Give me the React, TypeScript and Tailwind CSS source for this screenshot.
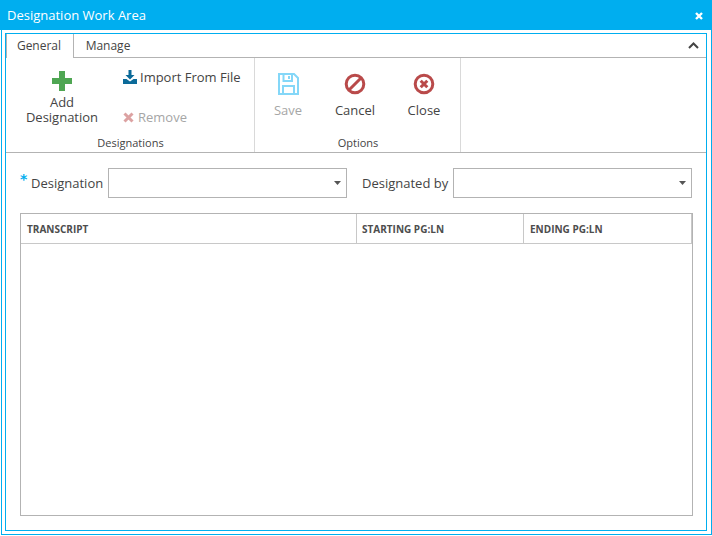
const font = "font-['Open_Sans',sans-serif]";

function RibbonButton({ icon, label, muted }: { icon: React.ReactNode; label: string; muted?: boolean }) {
  return (
    <div className={`flex flex-col items-center w-[70px] ${muted ? "text-[#a6a6a6]" : "text-[#444444]"}`}>
      <div className="h-[24px] w-[24px]">{icon}</div>
      <span className="mt-[5px] text-[13px] leading-[18px]">{label}</span>
    </div>
  );
}

function Select({ width }: { width: string }) {
  return (
    <div className={`${width} h-[30px] border border-[#b3b3b3] bg-white flex items-center justify-end pr-[5px]`}>
      <svg width="7" height="4" viewBox="0 0 7 4">
        <path d="M0 0h7L3.5 4z" fill="#555555" />
      </svg>
    </div>
  );
}

const SaveIcon = (
  <svg width="24" height="24" viewBox="0 0 24 24" fill="none" stroke="#84d7f8" strokeWidth="2">
    <path d="M3 2h15l4 4v16H3z" />
    <path d="M7.5 2v7h8.5V2" />
    <path d="M7 22v-8h11v8" />
    <path d="M13 4v3" />
  </svg>
);

const CancelIcon = (
  <svg width="24" height="24" viewBox="0 0 24 24" fill="none" stroke="#b94a4a" strokeWidth="3">
    <circle cx="12" cy="12" r="8.8" />
    <path d="M6 18 18 6" />
  </svg>
);

const CloseIcon = (
  <svg width="24" height="24" viewBox="0 0 24 24" fill="none" stroke="#b94a4a">
    <circle cx="12" cy="12" r="8.8" strokeWidth="3" />
    <path d="M8.7 8.7l6.6 6.6M15.3 8.7l-6.6 6.6" strokeWidth="3" />
  </svg>
);

export default function App() {
  return (
    <div className={`${font} w-[712px] h-[536px] bg-white overflow-hidden`}>
      <div className="w-[711px] h-[535px] ml-[1px] border-x border-b border-[#00aeef] flex flex-col">
        {/* Title bar */}
        <div className="h-[30px] -mx-[2px] pl-[7px] pr-[9px] pt-[1px] bg-[#00aeef] flex items-center justify-between text-white shrink-0">
          <span className="text-[13px] font-normal">Designation Work Area</span>
          <svg width="8" height="8" viewBox="0 0 8 8" stroke="#ffffff" strokeWidth="2.4" className="mr-[1px]">
            <path d="M1 1l6 6M7 1l-6 6" />
          </svg>
        </div>

        <div className="flex-1 mt-[3px] ml-[3px] mr-[4px] mb-[3px] border border-[#00aeef] flex flex-col min-h-0">
          {/* Tabs */}
          <div className="h-[24px] flex items-stretch border-b border-[#b3b3b3] relative shrink-0 text-[12px] text-[#444444]">
            <div className="w-[68px] h-[24px] pr-[2px] border-x border-[#b3b3b3] bg-white flex items-center justify-center">General</div>
            <div className="w-[68px] flex items-center justify-center">Manage</div>
            <svg width="11" height="7" viewBox="0 0 11 7" fill="none" stroke="#444444" strokeWidth="2" className="absolute right-[7px] top-[8px]">
              <path d="M1 6l4.5-4.5L10 6" />
            </svg>
          </div>

          {/* Ribbon */}
          <div className="h-[95px] flex border-b border-[#b3b3b3] shrink-0">
            <div className="w-[249px] border-r border-[#d9d9d9] flex flex-col">
              <div className="flex-1 flex">
                <div className="w-[112px] flex flex-col items-center pt-[13px] text-[13px] leading-[15px] text-[#444444]">
                  <svg width="20" height="20" viewBox="0 0 20 20" fill="#4fa653">
                    <path d="M7 0h6v7h7v6h-7v7H7v-7H0V7h7z" />
                  </svg>
                  <span className="mt-[4px] text-center">Add<br />Designation</span>
                </div>
                <div className="pt-[9px] pl-[5px] text-[13px] leading-[20px]">
                  <div className="flex items-center text-[#444444]">
                    <svg width="14" height="14" viewBox="0 0 14 14" fill="#0b6a99" className="mr-[3px]">
                      <path d="M5.5 0h3v5h3L7 9.5 2.5 5h3z" />
                      <path d="M0 9h3.5L7 11.5 10.5 9H14v5H0z" />
                    </svg>
                    <span>Import From File</span>
                  </div>
                  <div className="flex items-center text-[#a6a6a6] mt-[20px]">
                    <svg width="11" height="11" viewBox="0 0 11 11" stroke="#dca2a2" strokeWidth="3" className="mr-[4px]">
                      <path d="M1.5 1.5l8 8M9.5 1.5l-8 8" />
                    </svg>
                    <span>Remove</span>
                  </div>
                </div>
              </div>
              <div className="h-[20px] pt-[3px] pl-[1px] text-center text-[11px] leading-[16px] text-[#444444]">Designations</div>
            </div>
            <div className="w-[206px] border-r border-[#d9d9d9] flex flex-col">
              <div className="flex-1 flex pt-[14px]">
                <div className="ml-[-2px]"><RibbonButton icon={SaveIcon} label="Save" muted /></div>
                <div className="ml-[-3px]"><RibbonButton icon={CancelIcon} label="Cancel" /></div>
                <div className="ml-[-1px]"><RibbonButton icon={CloseIcon} label="Close" /></div>
              </div>
              <div className="h-[20px] pt-[3px] pl-[1px] text-center text-[11px] leading-[16px] text-[#444444]">Options</div>
            </div>
          </div>

          {/* Form */}
          <div className="flex-1 flex flex-col pl-[14px] pr-[13px] pt-[15px] pb-[14px] min-h-0">
            <div className="flex items-center h-[30px] text-[13px] text-[#444444] shrink-0">
              <span className="font-['DejaVu_Sans',sans-serif] text-[#00aeef] text-[14px] leading-none font-bold w-[11px] -mt-[8px]">*</span>
              <span className="w-[77px] pt-[2px]">Designation</span>
              <Select width="w-[239px]" />
              <span className="ml-[15px] w-[91px] pt-[2px]">Designated by</span>
              <Select width="w-[239px]" />
            </div>

            <div className="mt-[15px] flex-1 border border-[#b3b3b3] min-h-0">
              <div className="h-[30px] flex border-b border-[#c8c8c8] text-[10px] font-bold text-[#4d4d4d]">
                <div className="w-[336px] pl-[6px] pt-[2px] flex items-center border-r border-[#c8c8c8]">TRANSCRIPT</div>
                <div className="w-[167px] pl-[5px] pt-[2px] flex items-center border-r border-[#c8c8c8]">STARTING PG:LN</div>
                <div className="flex-1 pl-[6px] pt-[2px] flex items-center border-r border-[#c8c8c8]">ENDING PG:LN</div>
              </div>
            </div>
          </div>
        </div>
      </div>
    </div>
  );
}
